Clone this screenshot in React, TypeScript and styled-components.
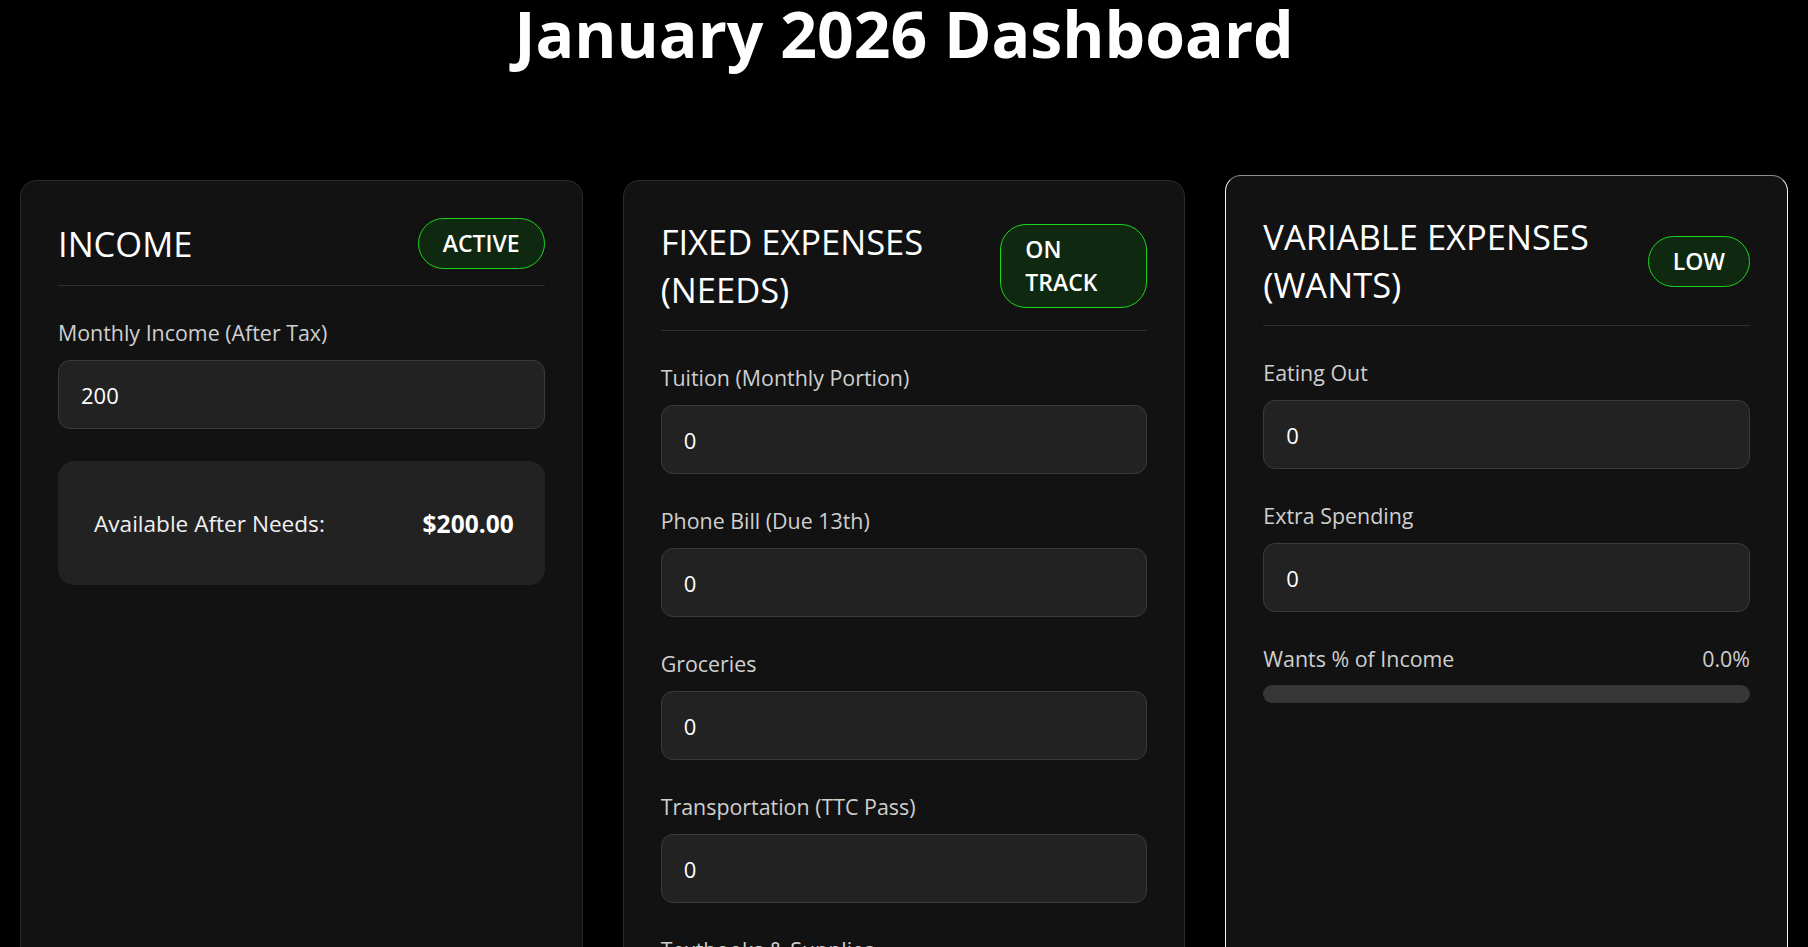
import * as React from 'react';
import styled, { createGlobalStyle } from 'styled-components';

const GlobalStyle = createGlobalStyle`
  html, body {
    margin: 0;
    padding: 0;
    background: #000;
  }
  body {
    font-family: 'Open Sans', 'Noto Sans', sans-serif;
    color: #fff;
  }
  * {
    box-sizing: border-box;
  }
`;

const Page = styled.div`
  min-height: 100vh;
  padding: 0 20px 40px;
  background: #000;
`;

const Title = styled.h1`
  margin: 0 0 114px;
  font-size: 64.3px;
  line-height: 66px;
  font-weight: 700;
  text-align: center;
  color: #fff;
`;

const Grid = styled.div`
  display: grid;
  grid-template-columns: repeat(3, 1fr);
  gap: 40px;
`;

const Card = styled.section<{ $highlight?: boolean }>`
  background: #121212;
  border: 1px solid ${p => (p.$highlight ? '#f2f2f2' : '#2a2a2a')};
  border-top-color: ${p => (p.$highlight ? '#8c8c8c' : '#2a2a2a')};
  border-radius: 16px;
  padding: 37px;
  transform: ${p => (p.$highlight ? 'translateY(-5px)' : 'none')};
`;

const CardHeader = styled.header`
  display: flex;
  justify-content: space-between;
  align-items: center;
  padding-bottom: 16px;
  border-bottom: 1px solid #2e2e2e;
  margin-bottom: 32px;
`;

const CardTitle = styled.h2`
  margin: 0;
  font-size: 34.5px;
  line-height: 48px;
  font-weight: 400;
  color: #fff;
`;

const Badge = styled.span`
  display: inline-block;
  padding: 8px 24px;
  border: 1px solid #1fd41f;
  border-radius: 26px;
  background: #0f2810;
  color: #fff;
  font-size: 23px;
  line-height: 33px;
  font-weight: 600;
  text-transform: uppercase;
`;

const Field = styled.div`
  margin-bottom: 32px;
`;

const Label = styled.label`
  display: block;
  margin-bottom: 13px;
  font-size: 21.4px;
  line-height: 29px;
  color: #cfcfcf;
`;

const Input = styled.input`
  display: block;
  width: 100%;
  height: 69px;
  padding: 0 22px;
  background: #222;
  border: 1px solid #3a3a3a;
  border-radius: 12px;
  color: #fff;
  font-family: inherit;
  font-size: 22px;
  outline: none;
`;

const Summary = styled.div`
  display: flex;
  justify-content: space-between;
  align-items: center;
  height: 124px;
  padding: 0 31px 0 36px;
  background: #222;
  border-radius: 16px;
`;

const SummaryLabel = styled.span`
  font-size: 22.6px;
  color: #f0f0f0;
`;

const SummaryValue = styled.span`
  font-size: 24.5px;
  font-weight: 700;
  color: #fff;
`;

const MeterHead = styled.div`
  display: flex;
  justify-content: space-between;
  margin-bottom: 12px;
  font-size: 21.4px;
  line-height: 29px;
  color: #cfcfcf;
`;

const Track = styled.div`
  height: 18px;
  border-radius: 9px;
  background: #363636;
  overflow: hidden;
`;

const Fill = styled.div`
  height: 100%;
  background: #1fd41f;
`;

type FieldDef = { label: string; value: string };

const needs: FieldDef[] = [
  { label: 'Tuition (Monthly Portion)', value: '0' },
  { label: 'Phone Bill (Due 13th)', value: '0' },
  { label: 'Groceries', value: '0' },
  { label: 'Transportation (TTC Pass)', value: '0' },
  { label: 'Textbooks & Supplies', value: '0' },
  { label: 'Rent', value: '0' },
];

const wants: FieldDef[] = [
  { label: 'Eating Out', value: '0' },
  { label: 'Extra Spending', value: '0' },
];

const InputField = ({ label, value }: FieldDef) => (
  <Field>
    <Label>{label}</Label>
    <Input type="text" defaultValue={value} />
  </Field>
);

export default function App() {
  const wantsPct = 0;

  return (
    <Page>
      <GlobalStyle />
      <Title>January 2026 Dashboard</Title>
      <Grid>
        <Card>
          <CardHeader>
            <CardTitle>INCOME</CardTitle>
            <Badge>Active</Badge>
          </CardHeader>
          <InputField label="Monthly Income (After Tax)" value="200" />
          <Summary>
            <SummaryLabel>Available After Needs:</SummaryLabel>
            <SummaryValue>$200.00</SummaryValue>
          </Summary>
        </Card>

        <Card>
          <CardHeader>
            <CardTitle>FIXED EXPENSES (NEEDS)</CardTitle>
            <Badge>On Track</Badge>
          </CardHeader>
          {needs.map(f => (
            <InputField key={f.label} {...f} />
          ))}
        </Card>

        <Card $highlight>
          <CardHeader>
            <CardTitle>VARIABLE EXPENSES (WANTS)</CardTitle>
            <Badge>Low</Badge>
          </CardHeader>
          {wants.map(f => (
            <InputField key={f.label} {...f} />
          ))}
          <MeterHead>
            <span>Wants % of Income</span>
            <span>{wantsPct.toFixed(1)}%</span>
          </MeterHead>
          <Track>
            <Fill style={{ width: `${wantsPct}%` }} />
          </Track>
        </Card>
      </Grid>
    </Page>
  );
}
